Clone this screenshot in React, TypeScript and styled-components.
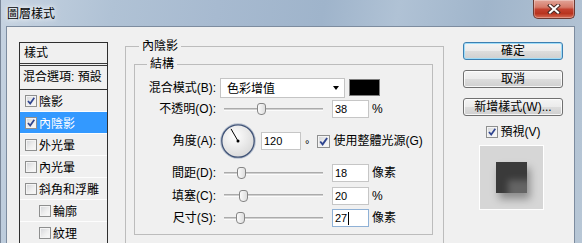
import styled, {createGlobalStyle} from 'styled-components';

const GlobalStyle = createGlobalStyle`
    html, body {
        margin: 0;
        padding: 0;
        background: #ffffff;
    }
    body {
        font-family: "Liberation Sans", "Noto Sans CJK TC", sans-serif;
        font-size: 12px;
        color: #000000;
    }
`;

const Window = styled.div`
    width: 582px;
    height: 243px;
    box-sizing: border-box;
    overflow: hidden;
    display: flex;
    flex-direction: column;
    padding: 0 7px 0 5px;
    border-left: 1px solid #7a8799;
    background: linear-gradient(100deg, #c6d3e1 0%, #b0c2d5 18%, #a7bad0 35%, #9fb4cb 52%, #b0c2d5 64%, #a0b5cb 78%, #b8c7d6 100%);
`;

const TitleBar = styled.div`
    height: 26px;
    flex-shrink: 0;
    display: flex;
    align-items: flex-start;
`;

const Title = styled.div`
    margin: 7px 0 0 1px;
    line-height: 14px;
    font-size: 12px;
    text-shadow: 0 0 4px #ffffff, 0 0 8px rgba(255, 255, 255, 0.9);
`;

const CloseButton = styled.div`
    margin-left: auto;
    width: 42px;
    height: 19px;
    box-sizing: border-box;
    border: 1px solid #6b3a33;
    border-top: none;
    border-radius: 0 0 5px 5px;
    background: linear-gradient(#e2a498 0%, #d57a69 40%, #c3412f 52%, #b8341f 75%, #d66c55 100%);
    box-shadow: inset 0 0 0 1px rgba(255, 255, 255, 0.3);
    display: flex;
    align-items: center;
    justify-content: center;
`;

const Client = styled.div`
    flex: 1;
    display: flex;
    align-items: flex-start;
    box-sizing: border-box;
    border: 1px solid #7d8c9f;
    border-bottom: none;
    background: #f0f0f0;
    padding: 12px 0 0 12px;
`;

/* left style list */
const StyleList = styled.div`
    width: 89px;
    flex-shrink: 0;
    box-sizing: border-box;
    margin-top: 3px;
    border: 1px solid #2f2f2f;
    background: #f0f0f0;
`;

const ListHeader = styled.div`
    height: 20px;
    line-height: 20px;
    padding-left: 4px;
    border-bottom: 3px double #3a3a3a;
`;

const BlendRow = styled.div`
    height: 23px;
    line-height: 23px;
    padding-left: 3px;
    white-space: nowrap;
    border-bottom: 1px solid #2f2f2f;
`;

const EffectRow = styled.div<{$indent?: boolean; $selected?: boolean}>`
    height: 21px;
    display: flex;
    align-items: center;
    gap: 2px;
    padding-left: ${p => (p.$indent ? 19 : 5)}px;
    border-bottom: 1px solid #fdfdfd;
    white-space: nowrap;
    background: ${p => (p.$selected ? '#3399ff' : 'transparent')};
    color: ${p => (p.$selected ? '#ffffff' : '#000000')};
`;

/* check box */
const BoxFrame = styled.span<{$size: number}>`
    display: inline-flex;
    flex-shrink: 0;
    width: ${p => p.$size}px;
    height: ${p => p.$size}px;
    box-sizing: border-box;
    border: 1px solid #8e8f8f;
    background: linear-gradient(135deg, #d2d4d8 0%, #eeeeee 55%, #fbfbfb 100%);
    box-shadow: inset 0 0 0 1px #f4f4f4;
`;

function CheckBox({checked, size = 12}: {checked?: boolean; size?: number}) {
    return (
        <BoxFrame $size={size}>
            {checked && (
                <svg width={size - 2} height={size - 2} viewBox="0 0 10 10">
                    <path d="M2 5 L4.2 7.6 L8.3 1.8" stroke="#2f4590" strokeWidth="1.7" fill="none"/>
                </svg>
            )}
        </BoxFrame>
    );
}

/* group boxes */
const GroupBox = styled.fieldset`
    margin: 0;
    min-width: 0;
    box-sizing: border-box;
    border: 1px solid #bcbcbc;
`;

const EffectGroup = styled(GroupBox)`
    width: 319px;
    flex-shrink: 0;
    margin-left: 17px;
    padding: 4px 10px 30px 8px;
`;

const StructureGroup = styled(GroupBox)`
    padding: 6px 0 5px 0;
`;

const Legend = styled.legend<{$offset: number}>`
    padding: 0 3px;
    margin-left: ${p => p.$offset}px;
    line-height: 14px;
    font-size: 12px;
`;

const Row = styled.div<{$h: number}>`
    height: ${p => p.$h}px;
    display: flex;
    align-items: center;
`;

const Label = styled.div`
    width: 81px;
    flex-shrink: 0;
    margin-right: 4px;
    text-align: right;
    white-space: nowrap;
    line-height: 14px;
`;

const Select = styled.div`
    width: 125px;
    height: 20px;
    box-sizing: border-box;
    border: 1px solid #c4c4c4;
    background: #ffffff;
    display: flex;
    align-items: center;
    justify-content: space-between;
    padding: 0 5px 0 6px;
`;

const Arrow = styled.span`
    width: 0;
    height: 0;
    border-top: 4px solid #000000;
    border-left: 3.5px solid transparent;
    border-right: 3.5px solid transparent;
`;

const Swatch = styled.div`
    width: 31px;
    height: 17px;
    box-sizing: border-box;
    margin-left: 4px;
    border: 1px solid #7d7d7d;
    background: #000000;
`;

const Slider = styled.div`
    position: relative;
    width: 107px;
    height: 14px;
    flex-shrink: 0;
    display: flex;
    align-items: center;
`;

const Track = styled.div`
    flex: 1;
    margin: 0 4px;
    height: 1px;
    background: #d0d0d0;
    border-top: 1px solid #ababab;
    border-bottom: 1px solid #fbfbfb;
`;

const Thumb = styled.div`
    position: absolute;
    top: 1px;
    width: 9px;
    height: 12px;
    box-sizing: border-box;
    border: 1px solid #858585;
    border-radius: 3px 3px 4px 4px;
    background: linear-gradient(90deg, #fafafa, #dedede);
`;

const NumInput = styled.div<{$w?: number; $focus?: boolean}>`
    width: ${p => p.$w ?? 37}px;
    height: 18px;
    box-sizing: border-box;
    margin-left: 5px;
    flex-shrink: 0;
    border: 1px solid ${p => (p.$focus ? '#8fb1d6' : '#c6c6c6')};
    background: #ffffff;
    padding-left: 2px;
    font-size: 11px;
    line-height: 16px;
    display: flex;
    align-items: center;
`;

const Caret = styled.span`
    width: 1px;
    height: 13px;
    background: #000000;
    margin-left: 1px;
`;

const Unit = styled.span`
    margin-left: 3px;
    line-height: 14px;
    white-space: nowrap;
`;

const Degree = styled.span`
    margin: 0 8px 0 4px;
    font-size: 11px;
    padding-top: 5px;
`;

const CheckLabel = styled.span`
    margin-left: 3px;
    line-height: 14px;
    white-space: nowrap;
`;

/* right side */
const SidePanel = styled.div`
    width: 100px;
    flex-shrink: 0;
    margin: 3px 0 0 19px;
    display: flex;
    flex-direction: column;
    align-items: center;
`;

const Button = styled.div<{$default?: boolean}>`
    width: 100px;
    height: 18px;
    box-sizing: border-box;
    margin-bottom: 10px;
    border: 1px solid ${p => (p.$default ? '#3c7fb1' : '#707070')};
    border-radius: 3px;
    background: linear-gradient(#f4f4f4 0%, #ebebeb 49%, #dddddd 50%, #cfcfcf 100%);
    box-shadow: inset 0 0 0 1px ${p => (p.$default ? '#9fdcf8' : 'rgba(255, 255, 255, 0.8)')};
    display: flex;
    align-items: center;
    justify-content: center;
    line-height: 14px;
    white-space: nowrap;
`;

const PreviewToggle = styled.div`
    height: 12px;
    display: flex;
    align-items: center;
`;

const PreviewBox = styled.div`
    width: 65px;
    height: 65px;
    box-sizing: border-box;
    margin: 7px 0 0 -3px;
    border: 1px solid #ffffff;
    background: #d6d6d6;
    display: flex;
    align-items: center;
    justify-content: center;
`;

const PreviewShape = styled.div`
    width: 31px;
    height: 31px;
    background: #646464;
    box-shadow: inset 12px 18px 6px rgba(0, 0, 0, 0.42), 3px 6px 8px rgba(0, 0, 0, 0.35);
`;

function AngleDial({angle}: {angle: number}) {
    const rad = (angle * Math.PI) / 180;
    const x2 = 18 + Math.cos(rad) * 14;
    const y2 = 18 - Math.sin(rad) * 14;
    return (
        <svg width="36" height="36" viewBox="0 0 36 36" style={{flexShrink: 0}}>
            <defs>
                <radialGradient id="dialFill" cx="40%" cy="35%" r="70%">
                    <stop offset="0" stopColor="#ffffff"/>
                    <stop offset="1" stopColor="#d8d8d8"/>
                </radialGradient>
            </defs>
            <circle cx="18" cy="18" r="17.2" fill="none" stroke="#b5bfce" strokeWidth="1.2"/>
            <circle cx="18" cy="18" r="16.2" fill="url(#dialFill)" stroke="#3f5276" strokeWidth="1.3"/>
            <line x1="18" y1="18" x2={x2} y2={y2} stroke="#000000" strokeWidth="1"/>
            <circle cx="18" cy="18" r="1.5" fill="#000000"/>
        </svg>
    );
}

function SliderField({pct}: {pct: number}) {
    const left = 4 + (pct / 100) * 99 - 4.5;
    return (
        <Slider>
            <Track/>
            <Thumb style={{left}}/>
        </Slider>
    );
}

const effects = [
    {name: '陰影', checked: true},
    {name: '內陰影', checked: true, selected: true},
    {name: '外光暈'},
    {name: '內光暈'},
    {name: '斜角和浮雕'},
    {name: '輪廓', indent: true},
    {name: '紋理', indent: true},
];

export default function App() {
    return (
        <>
            <GlobalStyle/>
            <Window>
                <TitleBar>
                    <Title>圖層樣式</Title>
                    <CloseButton>
                        <svg width="14" height="10" viewBox="0 0 14 10">
                            <path d="M3 1.5 L11 8.5 M11 1.5 L3 8.5" stroke="#4a2a26" strokeWidth="4" strokeLinecap="square"/>
                            <path d="M3 1.5 L11 8.5 M11 1.5 L3 8.5" stroke="#ffffff" strokeWidth="2" strokeLinecap="square"/>
                        </svg>
                    </CloseButton>
                </TitleBar>
                <Client>
                    <StyleList>
                        <ListHeader>樣式</ListHeader>
                        <BlendRow>混合選項: 預設</BlendRow>
                        {effects.map(e => (
                            <EffectRow key={e.name} $indent={e.indent} $selected={e.selected}>
                                <CheckBox checked={e.checked}/>
                                <span>{e.name}</span>
                            </EffectRow>
                        ))}
                    </StyleList>

                    <EffectGroup>
                        <Legend $offset={5}>內陰影</Legend>
                        <StructureGroup>
                            <Legend $offset={12}>結構</Legend>
                            <Row $h={21}>
                                <Label>混合模式(B):</Label>
                                <Select>
                                    <span>色彩增值</span>
                                    <Arrow/>
                                </Select>
                                <Swatch/>
                            </Row>
                            <Row $h={22}>
                                <Label>不透明(O):</Label>
                                <SliderField pct={38}/>
                                <NumInput>38</NumInput>
                                <Unit>%</Unit>
                            </Row>
                            <Row $h={42}>
                                <Label>角度(A):</Label>
                                <AngleDial angle={120}/>
                                <NumInput $w={40}>120</NumInput>
                                <Degree>°</Degree>
                                <CheckBox checked size={13}/>
                                <CheckLabel>使用整體光源(G)</CheckLabel>
                            </Row>
                            <Row $h={22}>
                                <Label>間距(D):</Label>
                                <SliderField pct={18}/>
                                <NumInput>18</NumInput>
                                <Unit>像素</Unit>
                            </Row>
                            <Row $h={23}>
                                <Label>填塞(C):</Label>
                                <SliderField pct={20}/>
                                <NumInput>20</NumInput>
                                <Unit>%</Unit>
                            </Row>
                            <Row $h={22}>
                                <Label>尺寸(S):</Label>
                                <SliderField pct={16.5}/>
                                <NumInput $focus>27<Caret/></NumInput>
                                <Unit>像素</Unit>
                            </Row>
                        </StructureGroup>
                    </EffectGroup>

                    <SidePanel>
                        <Button $default>確定</Button>
                        <Button>取消</Button>
                        <Button>新增樣式(W)...</Button>
                        <PreviewToggle>
                            <CheckBox checked/>
                            <CheckLabel>預視(V)</CheckLabel>
                        </PreviewToggle>
                        <PreviewBox>
                            <PreviewShape/>
                        </PreviewBox>
                    </SidePanel>
                </Client>
            </Window>
        </>
    );
}
